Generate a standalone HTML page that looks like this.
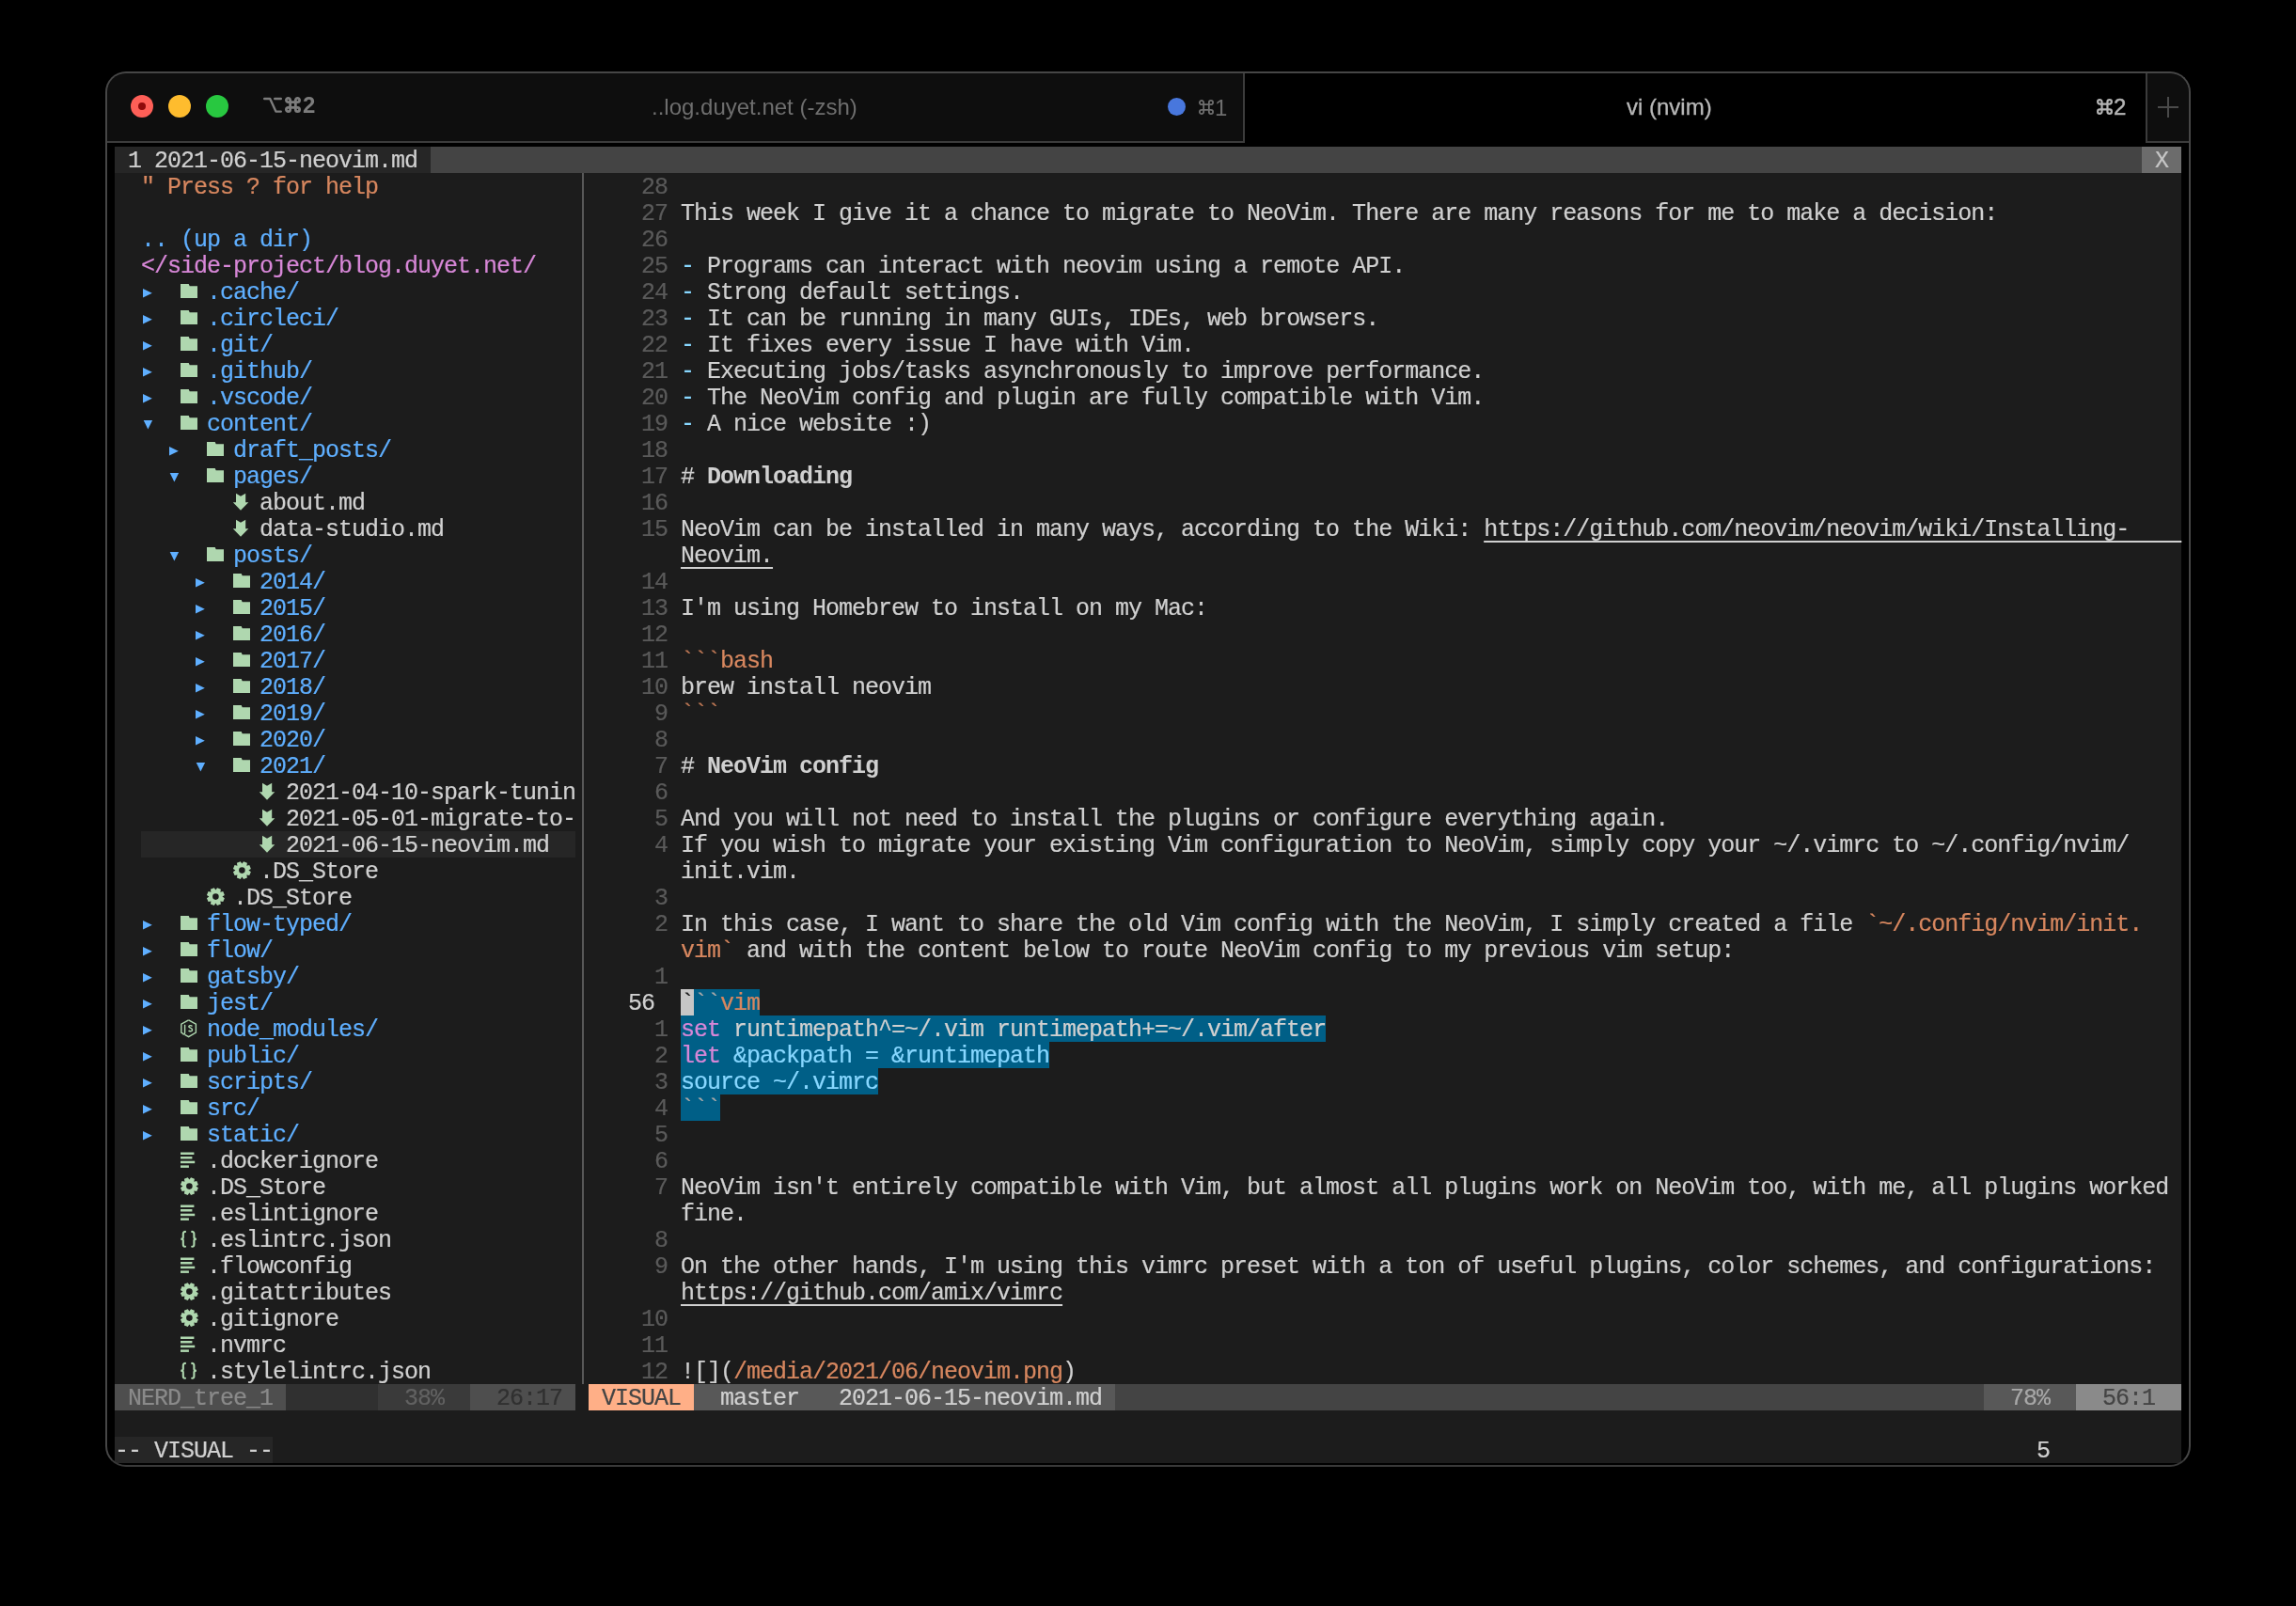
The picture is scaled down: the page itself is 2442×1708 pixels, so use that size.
<!DOCTYPE html>
<html><head><meta charset="utf-8"><style>
html,body{margin:0;padding:0;background:#000;}
body{width:2442px;height:1708px;overflow:hidden;position:relative;}
.b{position:absolute;}
.i{position:absolute;overflow:visible;}
.t{position:absolute;will-change:transform;white-space:pre;font-family:"Liberation Mono",monospace;font-size:25px;line-height:28px;height:28px;letter-spacing:-1.000px;padding-top:2px;box-sizing:border-box;-webkit-text-stroke:0.2px currentColor;}
.s{position:absolute;will-change:transform;white-space:pre;font-family:"Liberation Sans",sans-serif;font-size:24px;line-height:32px;}
.frame{position:absolute;left:112px;top:76px;width:2214px;height:1480px;border:2px solid #464646;border-bottom-color:#393939;border-radius:22px;pointer-events:none;}
</style></head><body>

<div class="b" style="left:112px;top:76px;width:2218px;height:1484px;border-radius:22px;background:#000;"></div>
<div class="b" style="left:114px;top:78px;width:1208px;height:72px;background:#0e0e0e;border-top-left-radius:20px;"></div>
<div class="b" style="left:2284px;top:78px;width:44px;height:72px;background:#0e0e0e;border-top-right-radius:20px;"></div>
<div class="b" style="left:114px;top:150px;width:1210px;height:2px;background:#3c3c3c;"></div>
<div class="b" style="left:1322px;top:78px;width:2px;height:74px;background:#3c3c3c;"></div>
<div class="b" style="left:2282px;top:78px;width:2px;height:74px;background:#3c3c3c;"></div>
<div class="b" style="left:2282px;top:150px;width:46px;height:2px;background:#3c3c3c;"></div>
<svg class="i" style="left:2290px;top:98px" width="32" height="32" viewBox="0 0 32 32"><path d="M16 5 V27 M5 16 H27" stroke="#4a4a4a" stroke-width="2"/></svg>
<div class="b" style="left:139px;top:101px;width:24px;height:24px;border-radius:50%;background:#fe5f57;"></div>
<div class="b" style="left:147px;top:109px;width:8px;height:8px;border-radius:50%;background:#8f0a0a;"></div>
<div class="b" style="left:179px;top:101px;width:24px;height:24px;border-radius:50%;background:#febc2e;"></div>
<div class="b" style="left:219px;top:101px;width:24px;height:24px;border-radius:50%;background:#28c840;"></div>
<svg class="i" style="left:280px;top:103px" width="20" height="18" viewBox="0 0 20 18"><path d="M1.2 2 H7.2 L13.4 15.6 H18.8 M12.2 2 H18.8" stroke="#7c7c7c" stroke-width="2.4" fill="none" stroke-linecap="round" stroke-linejoin="round"/></svg>
<svg class="i" style="left:303px;top:103px" width="17" height="17" viewBox="0 0 17 17"><path d="M5.66 5.66 H11.34 V11.34 H5.66 Z M5.66 5.66 V3.53 A2.13 2.13 0 1 0 3.53 5.66 H5.66 M11.34 5.66 V3.53 A2.13 2.13 0 1 1 13.47 5.66 H11.34 M5.66 11.34 V13.47 A2.13 2.13 0 1 1 3.53 11.34 H5.66 M11.34 11.34 V13.47 A2.13 2.13 0 1 0 13.47 11.34 H11.34" stroke="#7c7c7c" stroke-width="2.8" fill="none"/></svg>
<div class="s" style="left:322px;top:96px;color:#7c7c7c;font-weight:bold;">2</div>
<div class="s" style="left:693px;top:98px;color:#6e6e6e;">..log.duyet.net (-zsh)</div>
<div class="b" style="left:1242px;top:104px;width:19px;height:19px;border-radius:50%;background:#4877dd;"></div>
<svg class="i" style="left:1275px;top:106px" width="16" height="16" viewBox="0 0 16 16"><path d="M5.16 5.16 H10.84 V10.84 H5.16 Z M5.16 5.16 V3.03 A2.13 2.13 0 1 0 3.03 5.16 H5.16 M10.84 5.16 V3.03 A2.13 2.13 0 1 1 12.97 5.16 H10.84 M5.16 10.84 V12.97 A2.13 2.13 0 1 1 3.03 10.84 H5.16 M10.84 10.84 V12.97 A2.13 2.13 0 1 0 12.97 10.84 H10.84" stroke="#6e6e6e" stroke-width="1.8" fill="none"/></svg>
<div class="s" style="left:1292px;top:98.5px;color:#6e6e6e;">1</div>
<div class="s" style="left:1730px;top:98px;color:#b8b8b8;-webkit-text-stroke:0.3px #b8b8b8;">vi (nvim)</div>
<svg class="i" style="left:2230px;top:105px" width="17" height="17" viewBox="0 0 17 17"><path d="M5.54 5.54 H11.46 V11.46 H5.54 Z M5.54 5.54 V3.32 A2.22 2.22 0 1 0 3.32 5.54 H5.54 M11.46 5.54 V3.32 A2.22 2.22 0 1 1 13.68 5.54 H11.46 M5.54 11.46 V13.68 A2.22 2.22 0 1 1 3.32 11.46 H5.54 M11.46 11.46 V13.68 A2.22 2.22 0 1 0 13.68 11.46 H11.46" stroke="#b4b4b4" stroke-width="2.2" fill="none"/></svg>
<div class="s" style="left:2248px;top:98px;color:#b4b4b4;-webkit-text-stroke:0.5px #b4b4b4;">2</div>

<div class="b" style="left:122px;top:156px;width:2198px;height:1400px;background:#1c1c1c;"></div>
<div class="b" style="left:122px;top:156px;width:336px;height:28px;background:#262626;"></div>
<div class="b" style="left:458px;top:156px;width:1820px;height:28px;background:#444444;"></div>
<div class="b" style="left:2278px;top:156px;width:42px;height:28px;background:#6c6c6c;"></div>
<div class="t" style="top:156px;left:136px;color:#d0d0d0;">1 2021-06-15-neovim.md</div>
<div class="t" style="top:156px;left:2292px;color:#c6c6c6;">X</div>
<div class="b" style="left:150px;top:884px;width:462px;height:28px;background:#262626;"></div>
<div class="t" style="top:184px;left:150px;color:#d7875f;">" Press ? for help</div>
<div class="t" style="top:240px;left:150px;color:#5fafff;">.. (up a dir)</div>
<div class="t" style="top:268px;left:150px;color:#d787d7;">&lt;/side-project/blog.duyet.net/</div>
<svg class="i" style="left:150px;top:296px" width="14" height="28" viewBox="0 0 14 28"><path d="M2 11 L11.8 15.7 L2 20.4 Z" fill="#5fafff"/></svg>
<svg class="i" style="left:192px;top:296px" width="20" height="28" viewBox="0 0 20 28"><path d="M0 6 L8.7 6 L9.7 8.2 L18 8.2 L18 21.1 L0 21.1 Z" fill="#afd7af"/></svg>
<div class="t" style="top:296px;left:220px;color:#5fafff;">.cache/</div>
<svg class="i" style="left:150px;top:324px" width="14" height="28" viewBox="0 0 14 28"><path d="M2 11 L11.8 15.7 L2 20.4 Z" fill="#5fafff"/></svg>
<svg class="i" style="left:192px;top:324px" width="20" height="28" viewBox="0 0 20 28"><path d="M0 6 L8.7 6 L9.7 8.2 L18 8.2 L18 21.1 L0 21.1 Z" fill="#afd7af"/></svg>
<div class="t" style="top:324px;left:220px;color:#5fafff;">.circleci/</div>
<svg class="i" style="left:150px;top:352px" width="14" height="28" viewBox="0 0 14 28"><path d="M2 11 L11.8 15.7 L2 20.4 Z" fill="#5fafff"/></svg>
<svg class="i" style="left:192px;top:352px" width="20" height="28" viewBox="0 0 20 28"><path d="M0 6 L8.7 6 L9.7 8.2 L18 8.2 L18 21.1 L0 21.1 Z" fill="#afd7af"/></svg>
<div class="t" style="top:352px;left:220px;color:#5fafff;">.git/</div>
<svg class="i" style="left:150px;top:380px" width="14" height="28" viewBox="0 0 14 28"><path d="M2 11 L11.8 15.7 L2 20.4 Z" fill="#5fafff"/></svg>
<svg class="i" style="left:192px;top:380px" width="20" height="28" viewBox="0 0 20 28"><path d="M0 6 L8.7 6 L9.7 8.2 L18 8.2 L18 21.1 L0 21.1 Z" fill="#afd7af"/></svg>
<div class="t" style="top:380px;left:220px;color:#5fafff;">.github/</div>
<svg class="i" style="left:150px;top:408px" width="14" height="28" viewBox="0 0 14 28"><path d="M2 11 L11.8 15.7 L2 20.4 Z" fill="#5fafff"/></svg>
<svg class="i" style="left:192px;top:408px" width="20" height="28" viewBox="0 0 20 28"><path d="M0 6 L8.7 6 L9.7 8.2 L18 8.2 L18 21.1 L0 21.1 Z" fill="#afd7af"/></svg>
<div class="t" style="top:408px;left:220px;color:#5fafff;">.vscode/</div>
<svg class="i" style="left:150px;top:436px" width="14" height="28" viewBox="0 0 14 28"><path d="M2.7 11 L12.1 11 L7.4 20.4 Z" fill="#5fafff"/></svg>
<svg class="i" style="left:192px;top:436px" width="20" height="28" viewBox="0 0 20 28"><path d="M0 6 L8.7 6 L9.7 8.2 L18 8.2 L18 21.1 L0 21.1 Z" fill="#afd7af"/></svg>
<div class="t" style="top:436px;left:220px;color:#5fafff;">content/</div>
<svg class="i" style="left:178px;top:464px" width="14" height="28" viewBox="0 0 14 28"><path d="M2 11 L11.8 15.7 L2 20.4 Z" fill="#5fafff"/></svg>
<svg class="i" style="left:220px;top:464px" width="20" height="28" viewBox="0 0 20 28"><path d="M0 6 L8.7 6 L9.7 8.2 L18 8.2 L18 21.1 L0 21.1 Z" fill="#afd7af"/></svg>
<div class="t" style="top:464px;left:248px;color:#5fafff;">draft_posts/</div>
<svg class="i" style="left:178px;top:492px" width="14" height="28" viewBox="0 0 14 28"><path d="M2.7 11 L12.1 11 L7.4 20.4 Z" fill="#5fafff"/></svg>
<svg class="i" style="left:220px;top:492px" width="20" height="28" viewBox="0 0 20 28"><path d="M0 6 L8.7 6 L9.7 8.2 L18 8.2 L18 21.1 L0 21.1 Z" fill="#afd7af"/></svg>
<div class="t" style="top:492px;left:248px;color:#5fafff;">pages/</div>
<svg class="i" style="left:247px;top:520px" width="20" height="28" viewBox="0 0 20 28"><path d="M4 4.7 L9 7.8 L14.2 4.7 L14.2 14.3 L17.3 14.3 L9 22.7 L0.8 14.3 L4 14.3 Z" fill="#afd7af"/></svg>
<div class="t" style="top:520px;left:276px;color:#d0d0d0;">about.md</div>
<svg class="i" style="left:247px;top:548px" width="20" height="28" viewBox="0 0 20 28"><path d="M4 4.7 L9 7.8 L14.2 4.7 L14.2 14.3 L17.3 14.3 L9 22.7 L0.8 14.3 L4 14.3 Z" fill="#afd7af"/></svg>
<div class="t" style="top:548px;left:276px;color:#d0d0d0;">data-studio.md</div>
<svg class="i" style="left:178px;top:576px" width="14" height="28" viewBox="0 0 14 28"><path d="M2.7 11 L12.1 11 L7.4 20.4 Z" fill="#5fafff"/></svg>
<svg class="i" style="left:220px;top:576px" width="20" height="28" viewBox="0 0 20 28"><path d="M0 6 L8.7 6 L9.7 8.2 L18 8.2 L18 21.1 L0 21.1 Z" fill="#afd7af"/></svg>
<div class="t" style="top:576px;left:248px;color:#5fafff;">posts/</div>
<svg class="i" style="left:206px;top:604px" width="14" height="28" viewBox="0 0 14 28"><path d="M2 11 L11.8 15.7 L2 20.4 Z" fill="#5fafff"/></svg>
<svg class="i" style="left:248px;top:604px" width="20" height="28" viewBox="0 0 20 28"><path d="M0 6 L8.7 6 L9.7 8.2 L18 8.2 L18 21.1 L0 21.1 Z" fill="#afd7af"/></svg>
<div class="t" style="top:604px;left:276px;color:#5fafff;">2014/</div>
<svg class="i" style="left:206px;top:632px" width="14" height="28" viewBox="0 0 14 28"><path d="M2 11 L11.8 15.7 L2 20.4 Z" fill="#5fafff"/></svg>
<svg class="i" style="left:248px;top:632px" width="20" height="28" viewBox="0 0 20 28"><path d="M0 6 L8.7 6 L9.7 8.2 L18 8.2 L18 21.1 L0 21.1 Z" fill="#afd7af"/></svg>
<div class="t" style="top:632px;left:276px;color:#5fafff;">2015/</div>
<svg class="i" style="left:206px;top:660px" width="14" height="28" viewBox="0 0 14 28"><path d="M2 11 L11.8 15.7 L2 20.4 Z" fill="#5fafff"/></svg>
<svg class="i" style="left:248px;top:660px" width="20" height="28" viewBox="0 0 20 28"><path d="M0 6 L8.7 6 L9.7 8.2 L18 8.2 L18 21.1 L0 21.1 Z" fill="#afd7af"/></svg>
<div class="t" style="top:660px;left:276px;color:#5fafff;">2016/</div>
<svg class="i" style="left:206px;top:688px" width="14" height="28" viewBox="0 0 14 28"><path d="M2 11 L11.8 15.7 L2 20.4 Z" fill="#5fafff"/></svg>
<svg class="i" style="left:248px;top:688px" width="20" height="28" viewBox="0 0 20 28"><path d="M0 6 L8.7 6 L9.7 8.2 L18 8.2 L18 21.1 L0 21.1 Z" fill="#afd7af"/></svg>
<div class="t" style="top:688px;left:276px;color:#5fafff;">2017/</div>
<svg class="i" style="left:206px;top:716px" width="14" height="28" viewBox="0 0 14 28"><path d="M2 11 L11.8 15.7 L2 20.4 Z" fill="#5fafff"/></svg>
<svg class="i" style="left:248px;top:716px" width="20" height="28" viewBox="0 0 20 28"><path d="M0 6 L8.7 6 L9.7 8.2 L18 8.2 L18 21.1 L0 21.1 Z" fill="#afd7af"/></svg>
<div class="t" style="top:716px;left:276px;color:#5fafff;">2018/</div>
<svg class="i" style="left:206px;top:744px" width="14" height="28" viewBox="0 0 14 28"><path d="M2 11 L11.8 15.7 L2 20.4 Z" fill="#5fafff"/></svg>
<svg class="i" style="left:248px;top:744px" width="20" height="28" viewBox="0 0 20 28"><path d="M0 6 L8.7 6 L9.7 8.2 L18 8.2 L18 21.1 L0 21.1 Z" fill="#afd7af"/></svg>
<div class="t" style="top:744px;left:276px;color:#5fafff;">2019/</div>
<svg class="i" style="left:206px;top:772px" width="14" height="28" viewBox="0 0 14 28"><path d="M2 11 L11.8 15.7 L2 20.4 Z" fill="#5fafff"/></svg>
<svg class="i" style="left:248px;top:772px" width="20" height="28" viewBox="0 0 20 28"><path d="M0 6 L8.7 6 L9.7 8.2 L18 8.2 L18 21.1 L0 21.1 Z" fill="#afd7af"/></svg>
<div class="t" style="top:772px;left:276px;color:#5fafff;">2020/</div>
<svg class="i" style="left:206px;top:800px" width="14" height="28" viewBox="0 0 14 28"><path d="M2.7 11 L12.1 11 L7.4 20.4 Z" fill="#5fafff"/></svg>
<svg class="i" style="left:248px;top:800px" width="20" height="28" viewBox="0 0 20 28"><path d="M0 6 L8.7 6 L9.7 8.2 L18 8.2 L18 21.1 L0 21.1 Z" fill="#afd7af"/></svg>
<div class="t" style="top:800px;left:276px;color:#5fafff;">2021/</div>
<svg class="i" style="left:275px;top:828px" width="20" height="28" viewBox="0 0 20 28"><path d="M4 4.7 L9 7.8 L14.2 4.7 L14.2 14.3 L17.3 14.3 L9 22.7 L0.8 14.3 L4 14.3 Z" fill="#afd7af"/></svg>
<div class="t" style="top:828px;left:304px;color:#d0d0d0;">2021-04-10-spark-tunin</div>
<svg class="i" style="left:275px;top:856px" width="20" height="28" viewBox="0 0 20 28"><path d="M4 4.7 L9 7.8 L14.2 4.7 L14.2 14.3 L17.3 14.3 L9 22.7 L0.8 14.3 L4 14.3 Z" fill="#afd7af"/></svg>
<div class="t" style="top:856px;left:304px;color:#d0d0d0;">2021-05-01-migrate-to-</div>
<svg class="i" style="left:275px;top:884px" width="20" height="28" viewBox="0 0 20 28"><path d="M4 4.7 L9 7.8 L14.2 4.7 L14.2 14.3 L17.3 14.3 L9 22.7 L0.8 14.3 L4 14.3 Z" fill="#afd7af"/></svg>
<div class="t" style="top:884px;left:304px;color:#d0d0d0;">2021-06-15-neovim.md</div>
<svg class="i" style="left:248px;top:912px" width="20" height="28" viewBox="0 0 20 28"><path d="M16.40 13.62 L18.86 15.25 L17.25 19.12 L14.36 18.54 L14.34 18.56 L14.92 21.45 L11.05 23.06 L9.42 20.60 L9.38 20.60 L7.75 23.06 L3.88 21.45 L4.46 18.56 L4.44 18.54 L1.55 19.12 L-0.06 15.25 L2.40 13.62 L2.40 13.58 L-0.06 11.95 L1.55 8.08 L4.44 8.66 L4.46 8.64 L3.88 5.75 L7.75 4.14 L9.38 6.60 L9.42 6.60 L11.05 4.14 L14.92 5.75 L14.34 8.64 L14.36 8.66 L17.25 8.08 L18.86 11.95 L16.40 13.58 Z M12.7 13.6 A3.3 3.3 0 1 0 6.1000000000000005 13.6 A3.3 3.3 0 1 0 12.7 13.6 Z" fill="#afd7af" fill-rule="evenodd"/></svg>
<div class="t" style="top:912px;left:276px;color:#d0d0d0;">.DS_Store</div>
<svg class="i" style="left:220px;top:940px" width="20" height="28" viewBox="0 0 20 28"><path d="M16.40 13.62 L18.86 15.25 L17.25 19.12 L14.36 18.54 L14.34 18.56 L14.92 21.45 L11.05 23.06 L9.42 20.60 L9.38 20.60 L7.75 23.06 L3.88 21.45 L4.46 18.56 L4.44 18.54 L1.55 19.12 L-0.06 15.25 L2.40 13.62 L2.40 13.58 L-0.06 11.95 L1.55 8.08 L4.44 8.66 L4.46 8.64 L3.88 5.75 L7.75 4.14 L9.38 6.60 L9.42 6.60 L11.05 4.14 L14.92 5.75 L14.34 8.64 L14.36 8.66 L17.25 8.08 L18.86 11.95 L16.40 13.58 Z M12.7 13.6 A3.3 3.3 0 1 0 6.1000000000000005 13.6 A3.3 3.3 0 1 0 12.7 13.6 Z" fill="#afd7af" fill-rule="evenodd"/></svg>
<div class="t" style="top:940px;left:248px;color:#d0d0d0;">.DS_Store</div>
<svg class="i" style="left:150px;top:968px" width="14" height="28" viewBox="0 0 14 28"><path d="M2 11 L11.8 15.7 L2 20.4 Z" fill="#5fafff"/></svg>
<svg class="i" style="left:192px;top:968px" width="20" height="28" viewBox="0 0 20 28"><path d="M0 6 L8.7 6 L9.7 8.2 L18 8.2 L18 21.1 L0 21.1 Z" fill="#afd7af"/></svg>
<div class="t" style="top:968px;left:220px;color:#5fafff;">flow-typed/</div>
<svg class="i" style="left:150px;top:996px" width="14" height="28" viewBox="0 0 14 28"><path d="M2 11 L11.8 15.7 L2 20.4 Z" fill="#5fafff"/></svg>
<svg class="i" style="left:192px;top:996px" width="20" height="28" viewBox="0 0 20 28"><path d="M0 6 L8.7 6 L9.7 8.2 L18 8.2 L18 21.1 L0 21.1 Z" fill="#afd7af"/></svg>
<div class="t" style="top:996px;left:220px;color:#5fafff;">flow/</div>
<svg class="i" style="left:150px;top:1024px" width="14" height="28" viewBox="0 0 14 28"><path d="M2 11 L11.8 15.7 L2 20.4 Z" fill="#5fafff"/></svg>
<svg class="i" style="left:192px;top:1024px" width="20" height="28" viewBox="0 0 20 28"><path d="M0 6 L8.7 6 L9.7 8.2 L18 8.2 L18 21.1 L0 21.1 Z" fill="#afd7af"/></svg>
<div class="t" style="top:1024px;left:220px;color:#5fafff;">gatsby/</div>
<svg class="i" style="left:150px;top:1052px" width="14" height="28" viewBox="0 0 14 28"><path d="M2 11 L11.8 15.7 L2 20.4 Z" fill="#5fafff"/></svg>
<svg class="i" style="left:192px;top:1052px" width="20" height="28" viewBox="0 0 20 28"><path d="M0 6 L8.7 6 L9.7 8.2 L18 8.2 L18 21.1 L0 21.1 Z" fill="#afd7af"/></svg>
<div class="t" style="top:1052px;left:220px;color:#5fafff;">jest/</div>
<svg class="i" style="left:150px;top:1080px" width="14" height="28" viewBox="0 0 14 28"><path d="M2 11 L11.8 15.7 L2 20.4 Z" fill="#5fafff"/></svg>
<svg class="i" style="left:192px;top:1080px" width="20" height="28" viewBox="0 0 20 28"><g fill="none" stroke="#afd7af" stroke-width="1.4"><path d="M8.6 4.8 L16.4 9.2 L16.4 18.2 L8.6 22.6 L4.5 20.3"/><path d="M8.6 4.8 L0.8 9.2 L0.8 18.2 L3.2 19.6"/><path d="M4.6 9.8 L4.6 18.6 C4.6 20 3.6 20.2 2.6 19.6"/><path d="M12.4 11.5 C11.8 10.4 9.2 10.3 8.8 11.6 C8.4 13 12.6 13.3 12.6 15.2 C12.6 17 9.4 17.1 8.6 16"/></g></svg>
<div class="t" style="top:1080px;left:220px;color:#5fafff;">node_modules/</div>
<svg class="i" style="left:150px;top:1108px" width="14" height="28" viewBox="0 0 14 28"><path d="M2 11 L11.8 15.7 L2 20.4 Z" fill="#5fafff"/></svg>
<svg class="i" style="left:192px;top:1108px" width="20" height="28" viewBox="0 0 20 28"><path d="M0 6 L8.7 6 L9.7 8.2 L18 8.2 L18 21.1 L0 21.1 Z" fill="#afd7af"/></svg>
<div class="t" style="top:1108px;left:220px;color:#5fafff;">public/</div>
<svg class="i" style="left:150px;top:1136px" width="14" height="28" viewBox="0 0 14 28"><path d="M2 11 L11.8 15.7 L2 20.4 Z" fill="#5fafff"/></svg>
<svg class="i" style="left:192px;top:1136px" width="20" height="28" viewBox="0 0 20 28"><path d="M0 6 L8.7 6 L9.7 8.2 L18 8.2 L18 21.1 L0 21.1 Z" fill="#afd7af"/></svg>
<div class="t" style="top:1136px;left:220px;color:#5fafff;">scripts/</div>
<svg class="i" style="left:150px;top:1164px" width="14" height="28" viewBox="0 0 14 28"><path d="M2 11 L11.8 15.7 L2 20.4 Z" fill="#5fafff"/></svg>
<svg class="i" style="left:192px;top:1164px" width="20" height="28" viewBox="0 0 20 28"><path d="M0 6 L8.7 6 L9.7 8.2 L18 8.2 L18 21.1 L0 21.1 Z" fill="#afd7af"/></svg>
<div class="t" style="top:1164px;left:220px;color:#5fafff;">src/</div>
<svg class="i" style="left:150px;top:1192px" width="14" height="28" viewBox="0 0 14 28"><path d="M2 11 L11.8 15.7 L2 20.4 Z" fill="#5fafff"/></svg>
<svg class="i" style="left:192px;top:1192px" width="20" height="28" viewBox="0 0 20 28"><path d="M0 6 L8.7 6 L9.7 8.2 L18 8.2 L18 21.1 L0 21.1 Z" fill="#afd7af"/></svg>
<div class="t" style="top:1192px;left:220px;color:#5fafff;">static/</div>
<svg class="i" style="left:192px;top:1220px" width="20" height="28" viewBox="0 0 20 28"><g fill="#afd7af"><rect x="0" y="5.5" width="14.4" height="2.5"/><rect x="0" y="10" width="12.4" height="2.5"/><rect x="0" y="14.7" width="15.2" height="2.5"/><rect x="0" y="19.4" width="8.9" height="2.5"/></g></svg>
<div class="t" style="top:1220px;left:220px;color:#d0d0d0;">.dockerignore</div>
<svg class="i" style="left:192px;top:1248px" width="20" height="28" viewBox="0 0 20 28"><path d="M16.40 13.62 L18.86 15.25 L17.25 19.12 L14.36 18.54 L14.34 18.56 L14.92 21.45 L11.05 23.06 L9.42 20.60 L9.38 20.60 L7.75 23.06 L3.88 21.45 L4.46 18.56 L4.44 18.54 L1.55 19.12 L-0.06 15.25 L2.40 13.62 L2.40 13.58 L-0.06 11.95 L1.55 8.08 L4.44 8.66 L4.46 8.64 L3.88 5.75 L7.75 4.14 L9.38 6.60 L9.42 6.60 L11.05 4.14 L14.92 5.75 L14.34 8.64 L14.36 8.66 L17.25 8.08 L18.86 11.95 L16.40 13.58 Z M12.7 13.6 A3.3 3.3 0 1 0 6.1000000000000005 13.6 A3.3 3.3 0 1 0 12.7 13.6 Z" fill="#afd7af" fill-rule="evenodd"/></svg>
<div class="t" style="top:1248px;left:220px;color:#d0d0d0;">.DS_Store</div>
<svg class="i" style="left:192px;top:1276px" width="20" height="28" viewBox="0 0 20 28"><g fill="#afd7af"><rect x="0" y="5.5" width="14.4" height="2.5"/><rect x="0" y="10" width="12.4" height="2.5"/><rect x="0" y="14.7" width="15.2" height="2.5"/><rect x="0" y="19.4" width="8.9" height="2.5"/></g></svg>
<div class="t" style="top:1276px;left:220px;color:#d0d0d0;">.eslintignore</div>
<svg class="i" style="left:192px;top:1304px" width="20" height="28" viewBox="0 0 20 28"><g fill="none" stroke="#afd7af" stroke-width="2.1" stroke-linecap="round"><path d="M5 5.9 C2.7 5.9 2.8 7.5 2.8 9.5 L2.8 12 C2.8 13.2 2.2 13.8 0.3 13.8 C2.2 13.8 2.8 14.4 2.8 15.6 L2.8 18.5 C2.8 20.5 2.7 21.8 5 21.8"/><path d="M12.2 5.9 C14.5 5.9 14.4 7.5 14.4 9.5 L14.4 12 C14.4 13.2 15 13.8 16.9 13.8 C15 13.8 14.4 14.4 14.4 15.6 L14.4 18.5 C14.4 20.5 14.5 21.8 12.2 21.8"/></g></svg>
<div class="t" style="top:1304px;left:220px;color:#d0d0d0;">.eslintrc.json</div>
<svg class="i" style="left:192px;top:1332px" width="20" height="28" viewBox="0 0 20 28"><g fill="#afd7af"><rect x="0" y="5.5" width="14.4" height="2.5"/><rect x="0" y="10" width="12.4" height="2.5"/><rect x="0" y="14.7" width="15.2" height="2.5"/><rect x="0" y="19.4" width="8.9" height="2.5"/></g></svg>
<div class="t" style="top:1332px;left:220px;color:#d0d0d0;">.flowconfig</div>
<svg class="i" style="left:192px;top:1360px" width="20" height="28" viewBox="0 0 20 28"><path d="M16.40 13.62 L18.86 15.25 L17.25 19.12 L14.36 18.54 L14.34 18.56 L14.92 21.45 L11.05 23.06 L9.42 20.60 L9.38 20.60 L7.75 23.06 L3.88 21.45 L4.46 18.56 L4.44 18.54 L1.55 19.12 L-0.06 15.25 L2.40 13.62 L2.40 13.58 L-0.06 11.95 L1.55 8.08 L4.44 8.66 L4.46 8.64 L3.88 5.75 L7.75 4.14 L9.38 6.60 L9.42 6.60 L11.05 4.14 L14.92 5.75 L14.34 8.64 L14.36 8.66 L17.25 8.08 L18.86 11.95 L16.40 13.58 Z M12.7 13.6 A3.3 3.3 0 1 0 6.1000000000000005 13.6 A3.3 3.3 0 1 0 12.7 13.6 Z" fill="#afd7af" fill-rule="evenodd"/></svg>
<div class="t" style="top:1360px;left:220px;color:#d0d0d0;">.gitattributes</div>
<svg class="i" style="left:192px;top:1388px" width="20" height="28" viewBox="0 0 20 28"><path d="M16.40 13.62 L18.86 15.25 L17.25 19.12 L14.36 18.54 L14.34 18.56 L14.92 21.45 L11.05 23.06 L9.42 20.60 L9.38 20.60 L7.75 23.06 L3.88 21.45 L4.46 18.56 L4.44 18.54 L1.55 19.12 L-0.06 15.25 L2.40 13.62 L2.40 13.58 L-0.06 11.95 L1.55 8.08 L4.44 8.66 L4.46 8.64 L3.88 5.75 L7.75 4.14 L9.38 6.60 L9.42 6.60 L11.05 4.14 L14.92 5.75 L14.34 8.64 L14.36 8.66 L17.25 8.08 L18.86 11.95 L16.40 13.58 Z M12.7 13.6 A3.3 3.3 0 1 0 6.1000000000000005 13.6 A3.3 3.3 0 1 0 12.7 13.6 Z" fill="#afd7af" fill-rule="evenodd"/></svg>
<div class="t" style="top:1388px;left:220px;color:#d0d0d0;">.gitignore</div>
<svg class="i" style="left:192px;top:1416px" width="20" height="28" viewBox="0 0 20 28"><g fill="#afd7af"><rect x="0" y="5.5" width="14.4" height="2.5"/><rect x="0" y="10" width="12.4" height="2.5"/><rect x="0" y="14.7" width="15.2" height="2.5"/><rect x="0" y="19.4" width="8.9" height="2.5"/></g></svg>
<div class="t" style="top:1416px;left:220px;color:#d0d0d0;">.nvmrc</div>
<svg class="i" style="left:192px;top:1444px" width="20" height="28" viewBox="0 0 20 28"><g fill="none" stroke="#afd7af" stroke-width="2.1" stroke-linecap="round"><path d="M5 5.9 C2.7 5.9 2.8 7.5 2.8 9.5 L2.8 12 C2.8 13.2 2.2 13.8 0.3 13.8 C2.2 13.8 2.8 14.4 2.8 15.6 L2.8 18.5 C2.8 20.5 2.7 21.8 5 21.8"/><path d="M12.2 5.9 C14.5 5.9 14.4 7.5 14.4 9.5 L14.4 12 C14.4 13.2 15 13.8 16.9 13.8 C15 13.8 14.4 14.4 14.4 15.6 L14.4 18.5 C14.4 20.5 14.5 21.8 12.2 21.8"/></g></svg>
<div class="t" style="top:1444px;left:220px;color:#d0d0d0;">.stylelintrc.json</div>
<div class="b" style="left:619px;top:184px;width:2px;height:1288px;background:#585858;"></div>
<div class="b" style="left:724px;top:1052px;width:84px;height:28px;background:#005f87;"></div>
<div class="b" style="left:724px;top:1080px;width:686px;height:28px;background:#005f87;"></div>
<div class="b" style="left:724px;top:1108px;width:392px;height:28px;background:#005f87;"></div>
<div class="b" style="left:724px;top:1136px;width:210px;height:28px;background:#005f87;"></div>
<div class="b" style="left:724px;top:1164px;width:42px;height:28px;background:#005f87;"></div>
<div class="b" style="left:724px;top:1052px;width:14px;height:28px;background:#c6c6c6;"></div>
<div class="t" style="top:184px;left:682px;color:#5a5a5a;">28</div>
<div class="t" style="top:212px;left:682px;color:#5a5a5a;">27</div>
<div class="t" style="top:212px;left:724px;"><span style="color:#d0d0d0;">This week I give it a chance to migrate to NeoVim. There are many reasons for me to make a decision:</span></div>
<div class="t" style="top:240px;left:682px;color:#5a5a5a;">26</div>
<div class="t" style="top:268px;left:682px;color:#5a5a5a;">25</div>
<div class="t" style="top:268px;left:724px;"><span style="color:#87d7ff;">-</span><span style="color:#d0d0d0;"> Programs can interact with neovim using a remote API.</span></div>
<div class="t" style="top:296px;left:682px;color:#5a5a5a;">24</div>
<div class="t" style="top:296px;left:724px;"><span style="color:#87d7ff;">-</span><span style="color:#d0d0d0;"> Strong default settings.</span></div>
<div class="t" style="top:324px;left:682px;color:#5a5a5a;">23</div>
<div class="t" style="top:324px;left:724px;"><span style="color:#87d7ff;">-</span><span style="color:#d0d0d0;"> It can be running in many GUIs, IDEs, web browsers.</span></div>
<div class="t" style="top:352px;left:682px;color:#5a5a5a;">22</div>
<div class="t" style="top:352px;left:724px;"><span style="color:#87d7ff;">-</span><span style="color:#d0d0d0;"> It fixes every issue I have with Vim.</span></div>
<div class="t" style="top:380px;left:682px;color:#5a5a5a;">21</div>
<div class="t" style="top:380px;left:724px;"><span style="color:#87d7ff;">-</span><span style="color:#d0d0d0;"> Executing jobs/tasks asynchronously to improve performance.</span></div>
<div class="t" style="top:408px;left:682px;color:#5a5a5a;">20</div>
<div class="t" style="top:408px;left:724px;"><span style="color:#87d7ff;">-</span><span style="color:#d0d0d0;"> The NeoVim config and plugin are fully compatible with Vim.</span></div>
<div class="t" style="top:436px;left:682px;color:#5a5a5a;">19</div>
<div class="t" style="top:436px;left:724px;"><span style="color:#87d7ff;">-</span><span style="color:#d0d0d0;"> A nice website :)</span></div>
<div class="t" style="top:464px;left:682px;color:#5a5a5a;">18</div>
<div class="t" style="top:492px;left:682px;color:#5a5a5a;">17</div>
<div class="t" style="top:492px;left:724px;"><span style="color:#d0d0d0;"># </span><span style="color:#d0d0d0;font-weight:bold;-webkit-text-stroke:0;">Downloading</span></div>
<div class="t" style="top:520px;left:682px;color:#5a5a5a;">16</div>
<div class="t" style="top:548px;left:682px;color:#5a5a5a;">15</div>
<div class="t" style="top:548px;left:724px;"><span style="color:#d0d0d0;">NeoVim can be installed in many ways, according to the Wiki: </span><span style="color:#d0d0d0;text-decoration:underline;text-decoration-thickness:1.5px;text-underline-offset:5px;">https://github.com/neovim/neovim/wiki/Installing-    </span></div>
<div class="t" style="top:576px;left:724px;"><span style="color:#d0d0d0;text-decoration:underline;text-decoration-thickness:1.5px;text-underline-offset:5px;">Neovim.</span></div>
<div class="t" style="top:604px;left:682px;color:#5a5a5a;">14</div>
<div class="t" style="top:632px;left:682px;color:#5a5a5a;">13</div>
<div class="t" style="top:632px;left:724px;"><span style="color:#d0d0d0;">I'm using Homebrew to install on my Mac:</span></div>
<div class="t" style="top:660px;left:682px;color:#5a5a5a;">12</div>
<div class="t" style="top:688px;left:682px;color:#5a5a5a;">11</div>
<div class="t" style="top:688px;left:724px;"><span style="color:#d7875f;opacity:.85;">```</span><span style="color:#d7875f;">bash</span></div>
<div class="t" style="top:716px;left:682px;color:#5a5a5a;">10</div>
<div class="t" style="top:716px;left:724px;"><span style="color:#d0d0d0;">brew install neovim</span></div>
<div class="t" style="top:744px;left:696px;color:#5a5a5a;">9</div>
<div class="t" style="top:744px;left:724px;"><span style="color:#d7875f;opacity:.85;">```</span></div>
<div class="t" style="top:772px;left:696px;color:#5a5a5a;">8</div>
<div class="t" style="top:800px;left:696px;color:#5a5a5a;">7</div>
<div class="t" style="top:800px;left:724px;"><span style="color:#d0d0d0;"># </span><span style="color:#d0d0d0;font-weight:bold;-webkit-text-stroke:0;">NeoVim config</span></div>
<div class="t" style="top:828px;left:696px;color:#5a5a5a;">6</div>
<div class="t" style="top:856px;left:696px;color:#5a5a5a;">5</div>
<div class="t" style="top:856px;left:724px;"><span style="color:#d0d0d0;">And you will not need to install the plugins or configure everything again.</span></div>
<div class="t" style="top:884px;left:696px;color:#5a5a5a;">4</div>
<div class="t" style="top:884px;left:724px;"><span style="color:#d0d0d0;">If you wish to migrate your existing Vim configuration to NeoVim, simply copy your ~/.vimrc to ~/.config/nvim/</span></div>
<div class="t" style="top:912px;left:724px;"><span style="color:#d0d0d0;">init.vim.</span></div>
<div class="t" style="top:940px;left:696px;color:#5a5a5a;">3</div>
<div class="t" style="top:968px;left:696px;color:#5a5a5a;">2</div>
<div class="t" style="top:968px;left:724px;"><span style="color:#d0d0d0;">In this case, I want to share the old Vim config with the NeoVim, I simply created a file </span><span style="color:#d7875f;">`~/.config/nvim/init.</span></div>
<div class="t" style="top:996px;left:724px;"><span style="color:#d7875f;">vim`</span><span style="color:#d0d0d0;"> and with the content below to route NeoVim config to my previous vim setup:</span></div>
<div class="t" style="top:1024px;left:696px;color:#5a5a5a;">1</div>
<div class="t" style="top:1052px;left:668px;color:#d0d0d0;">56</div>
<div class="t" style="top:1052px;left:724px;"><span style="color:#1c1c1c;">`</span><span style="color:#a8a8a8;">``</span><span style="color:#d7875f;">vim</span></div>
<div class="t" style="top:1080px;left:696px;color:#5a5a5a;">1</div>
<div class="t" style="top:1080px;left:724px;"><span style="color:#d787d7;">set</span><span style="color:#d0d0d0;"> runtimepath^=~/.vim runtimepath+=~/.vim/after</span></div>
<div class="t" style="top:1108px;left:696px;color:#5a5a5a;">2</div>
<div class="t" style="top:1108px;left:724px;"><span style="color:#d787d7;">let</span><span style="color:#87d7ff;"> &amp;packpath = &amp;runtimepath</span></div>
<div class="t" style="top:1136px;left:696px;color:#5a5a5a;">3</div>
<div class="t" style="top:1136px;left:724px;"><span style="color:#87d7ff;">source ~/.vimrc</span></div>
<div class="t" style="top:1164px;left:696px;color:#5a5a5a;">4</div>
<div class="t" style="top:1164px;left:724px;"><span style="color:#a8a8a8;">```</span></div>
<div class="t" style="top:1192px;left:696px;color:#5a5a5a;">5</div>
<div class="t" style="top:1220px;left:696px;color:#5a5a5a;">6</div>
<div class="t" style="top:1248px;left:696px;color:#5a5a5a;">7</div>
<div class="t" style="top:1248px;left:724px;"><span style="color:#d0d0d0;">NeoVim isn't entirely compatible with Vim, but almost all plugins work on NeoVim too, with me, all plugins worked</span></div>
<div class="t" style="top:1276px;left:724px;"><span style="color:#d0d0d0;">fine.</span></div>
<div class="t" style="top:1304px;left:696px;color:#5a5a5a;">8</div>
<div class="t" style="top:1332px;left:696px;color:#5a5a5a;">9</div>
<div class="t" style="top:1332px;left:724px;"><span style="color:#d0d0d0;">On the other hands, I'm using this vimrc preset with a ton of useful plugins, color schemes, and configurations:</span></div>
<div class="t" style="top:1360px;left:724px;"><span style="color:#d0d0d0;text-decoration:underline;text-decoration-thickness:1.5px;text-underline-offset:5px;">https://github.com/amix/vimrc</span></div>
<div class="t" style="top:1388px;left:682px;color:#5a5a5a;">10</div>
<div class="t" style="top:1416px;left:682px;color:#5a5a5a;">11</div>
<div class="t" style="top:1444px;left:682px;color:#5a5a5a;">12</div>
<div class="t" style="top:1444px;left:724px;"><span style="color:#d0d0d0;">![](</span><span style="color:#d7875f;">/media/2021/06/neovim.png</span><span style="color:#d0d0d0;">)</span></div>
<div class="b" style="left:122px;top:1472px;width:182px;height:28px;background:#4e4e4e;"></div>
<div class="t" style="top:1472px;left:136px;color:#8a8a8a;">NERD_tree_1</div>
<div class="b" style="left:304px;top:1472px;width:98px;height:28px;background:#303030;"></div>
<div class="b" style="left:402px;top:1472px;width:98px;height:28px;background:#3a3a3a;"></div>
<div class="t" style="top:1472px;left:430px;color:#626262;">38%</div>
<div class="b" style="left:500px;top:1472px;width:112px;height:28px;background:#4e4e4e;"></div>
<div class="t" style="top:1472px;left:528px;color:#303030;">26:17</div>
<div class="b" style="left:626px;top:1472px;width:112px;height:28px;background:#ffaf87;"></div>
<div class="t" style="top:1472px;left:640px;color:#444444;">VISUAL</div>
<div class="b" style="left:738px;top:1472px;width:448px;height:28px;background:#585858;"></div>
<div class="t" style="top:1472px;left:766px;color:#d0d0d0;">master</div>
<div class="t" style="top:1472px;left:892px;color:#d0d0d0;">2021-06-15-neovim.md</div>
<div class="b" style="left:1186px;top:1472px;width:924px;height:28px;background:#444444;"></div>
<div class="b" style="left:2110px;top:1472px;width:98px;height:28px;background:#585858;"></div>
<div class="t" style="top:1472px;left:2138px;color:#a8a8a8;">78%</div>
<div class="b" style="left:2208px;top:1472px;width:112px;height:28px;background:#8a8a8a;"></div>
<div class="t" style="top:1472px;left:2236px;color:#444444;">56:1</div>
<div class="b" style="left:122px;top:1528px;width:168px;height:28px;background:#262626;"></div>
<div class="t" style="top:1528px;left:122px;color:#d0d0d0;">-- VISUAL --</div>
<div class="t" style="top:1528px;left:2166px;color:#d0d0d0;">5</div>
<div class="frame"></div>
</body></html>
